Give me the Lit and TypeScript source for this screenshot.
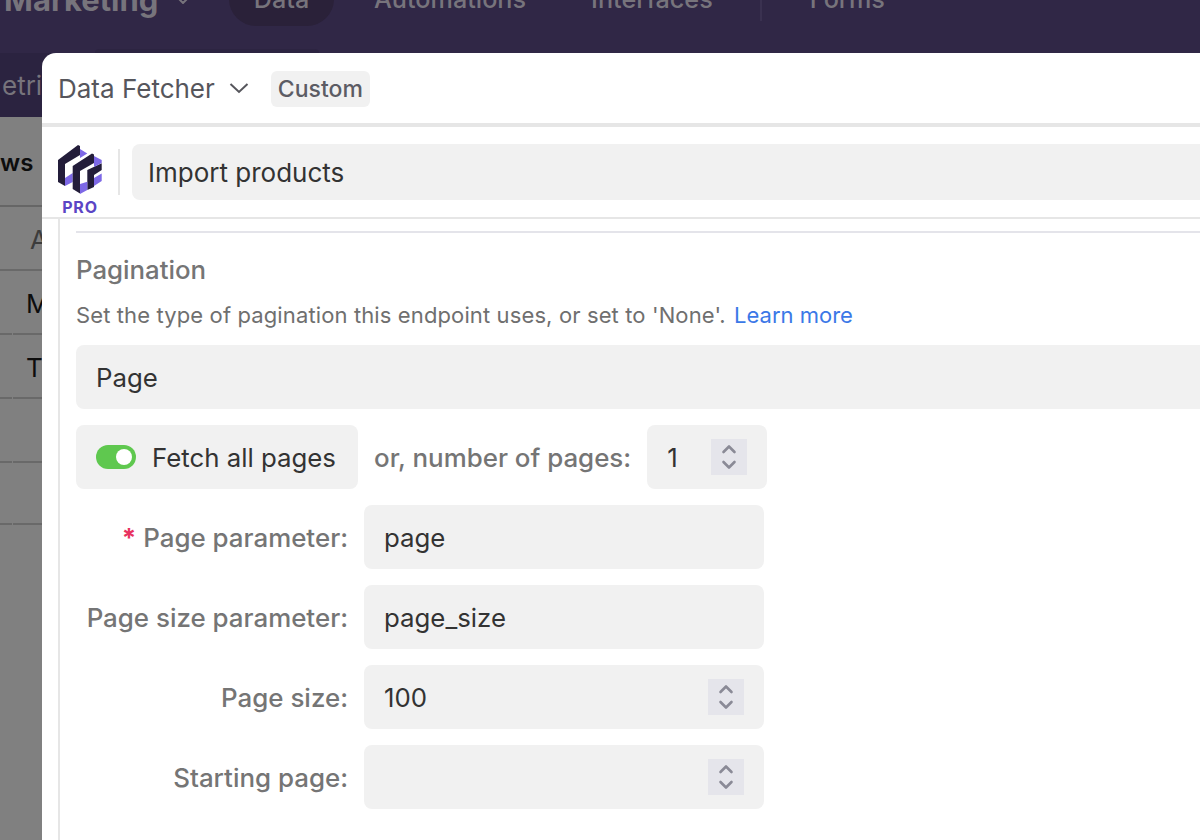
import { LitElement, html, css } from "lit";
import { customElement } from "lit/decorators.js";

const spinner = html`<span class="spin"><svg width="16" height="26" viewBox="0 0 16 26" fill="none" stroke="#8a8a96" stroke-width="2.6" stroke-linecap="round" stroke-linejoin="round"><path d="M2.5 8 L8 2.5 L13.5 8"/><path d="M2.5 18 L8 23.5 L13.5 18"/></svg></span>`;

@customElement("app-root")
export class AppRoot extends LitElement {
  static styles = css`
    :host { display: block; width: 1200px; height: 840px; position: relative; overflow: hidden; font-family: Inter, "Liberation Sans", sans-serif; background: #808080; }
    * { box-sizing: border-box; }
    .top { height: 53px; background: #302746; overflow: hidden; position: relative; }
    .topin { display: flex; align-items: center; height: 54px; margin-top: -28px; color: #77747c; font-size: 25.2px; font-weight: 500; }
    .brand { margin-left: 4px; width: 225px; font-weight: 700; font-size: 31px; flex: none; display: flex; align-items: center; }
    .brand svg { margin-left: 18px; margin-top: 2px; }
    .pill { background: #2a2139; border-radius: 28px; width: 105px; height: 54px; display: flex; align-items: center; justify-content: center; flex: none; }
    .nav { flex: none; }
    .vd { width: 2px; height: 44px; background: #3a3150; flex: none; margin: 0 48px 0 47px; }
    .tabtop { position: absolute; left: 95px; top: 49px; width: 224px; height: 4px; background: #2c2441; border-radius: 6px 6px 0 0; }
    .sub { height: 64px; background: #2b2340; color: #77747c; font-size: 26px; display: flex; align-items: center; padding-left: 2px; }
    .r0 { height: 90px; padding-top: 3px; display: flex; align-items: center; font-size: 24px; font-weight: 600; color: #0d0d0d; border-bottom: 2px solid #666; }
    .r { height: 64px; display: flex; align-items: center; padding-left: 26px; font-size: 26px; color: #0d0d0d; background: linear-gradient(#696969, #696969) 0 100% / 12px 2px no-repeat, linear-gradient(#696969, #696969) 13px 100% / 100% 2px no-repeat; }
    .r.head { padding-left: 30px; color: #3c3c3c; background: linear-gradient(#696969, #696969) 0 100% / 100% 2px no-repeat; }
    .r.last { height: 62px; }
    .modal { position: absolute; left: 42px; top: 53px; right: 0; bottom: 0; background: #fff; border-top-left-radius: 14px; display: flex; flex-direction: column; }
    .mh { height: 74px; flex: none; border-bottom: 4px solid #e6e6e6; display: flex; align-items: center; padding-left: 16px; color: #56565c; font-size: 26px; }
    .chev { margin-left: 14px; }
    .tag { margin: 2px 0 0 22px; background: #f1f1f1; border-radius: 6px; height: 36px; width: 99px; display: flex; align-items: center; justify-content: center; font-size: 23px; font-weight: 500; color: #5c5c64; }
    .mt { height: 92px; flex: none; border-bottom: 2px solid #e6e6e6; display: flex; align-items: flex-start; padding-left: 16px; }
    .logo { width: 44px; margin-top: 18px; display: flex; flex-direction: column; align-items: center; flex: none; }
    .pro { font-size: 16px; font-weight: 700; color: #5b45c5; letter-spacing: 0.8px; line-height: 18px; margin-top: 4px; }
    .div { width: 2px; height: 46px; background: #e6e6e6; margin: 22px 12px 0 16px; flex: none; }
    .name { margin-top: 17px; flex: 1; height: 56px; background: #f1f1f1; border-radius: 8px 0 0 8px; display: flex; align-items: center; padding-left: 16px; font-size: 26px; color: #333; }
    .body { flex: 1; margin-left: 16px; border-left: 2px solid #e6e6e6; padding: 12px 0 0 16px; display: flex; flex-direction: column; }
    hr { border: 0; height: 2px; background: #e4e4ea; margin: 0; }
    h3 { margin: 22px 0 0; font-size: 25.8px; line-height: 30px; font-weight: 500; color: #757575; }
    p { margin: 15px 0 0; font-size: 22px; line-height: 30px; color: #6f6f6f; letter-spacing: 0.12px; }
    a { color: #3b78e7; text-decoration: none; letter-spacing: 0; margin-left: 2px; }
    .field { background: #f1f1f1; border-radius: 8px; height: 64px; display: flex; align-items: center; font-size: 25.8px; color: #333; }
    .sel { margin-top: 15px; padding-left: 20px; border-radius: 8px 0 0 8px; }
    .line { display: flex; align-items: center; margin-top: 16px; }
    .fetch { width: 282px; padding-left: 20px; flex: none; }
    .sw { width: 40px; height: 24px; background: #5fc84f; border-radius: 12px; position: relative; margin-right: 16px; flex: none; }
    .sw i { position: absolute; right: 4px; top: 4px; width: 16px; height: 16px; background: #fff; border-radius: 50%; }
    .or { margin-left: 16px; margin-right: 16px; color: #757575; font-size: 25.9px; font-weight: 500; flex: none; padding-top: 1px; }
    .num { width: 120px; padding-left: 20px; justify-content: space-between; padding-right: 20px; flex: none; }
    .spin { width: 36px; height: 36px; background: #e5e5eb; display: flex; align-items: center; justify-content: center; flex: none; }
    .lab { width: 272px; text-align: right; color: #757575; font-size: 25.9px; font-weight: 500; flex: none; padding-top: 1px; }
    .lab b { color: #e8335f; font-weight: 700; }
    .inp { width: 400px; margin-left: 16px; padding: 0 20px; justify-content: space-between; flex: none; }
  `;
  render() {
    return html`
      <div class="top">
        <div class="topin">
          <span class="brand">Marketing<svg width="14" height="8" viewBox="0 0 14 8" fill="none" stroke="#77747c" stroke-width="2"><path d="M1 1 L7 7 L13 1"/></svg></span>
          <span class="pill">Data</span>
          <span class="nav" style="margin-left:40px">Automations</span>
          <span class="nav" style="margin-left:65px">Interfaces</span>
          <span class="vd"></span>
          <span class="nav">Forms</span>
        </div>
        <span class="tabtop"></span>
      </div>
      <div class="sub">etri</div>
      <div class="rows">
        <div class="r0">ws</div>
        <div class="r head">A</div>
        <div class="r">M</div>
        <div class="r">T</div>
        <div class="r"></div>
        <div class="r last"></div>
      </div>
      <div class="modal">
        <div class="mh">Data Fetcher
          <svg class="chev" width="20" height="12" viewBox="0 0 20 12" fill="none" stroke="#56565c" stroke-width="2"><path d="M1.5 2 L10 10 L18.5 2"/></svg>
          <span class="tag">Custom</span>
        </div>
        <div class="mt">
          <div class="logo">
            <svg width="44" height="49" viewBox="0 0 44 49">
              <path fill="#231d3a" d="M0 15 L20 0 L22 1 L22 10 L7 19 L7 41 L0 37Z"/>
              <path fill="#7d68e6" d="M22 4 L29.3 8.5 L22 13Z M7 33 L14.7 28 L14.7 37 L7 41Z"/>
              <path fill="#231d3a" d="M14.7 21 L34 8.5 L36 9.5 L36 18 L22 26 L22 48.5 L14.7 44Z"/>
              <path fill="#231d3a" d="M29.3 25 L43.7 18.3 L43.7 25 L36 30 L36 42 L29.3 45Z"/>
              <path fill="#7d68e6" d="M36 11 L43.7 15 L43.7 18 L36 22Z M36 33 L43.7 28.5 L43.7 36 L36 41Z M22 39 L29.3 36.7 L29.3 45 L22 49Z"/>
            </svg>
            <span class="pro">PRO</span>
          </div>
          <span class="div"></span>
          <div class="name">Import products</div>
        </div>
        <div class="body">
          <hr />
          <h3>Pagination</h3>
          <p>Set the type of pagination this endpoint uses, or set to 'None'. <a>Learn more</a></p>
          <div class="field sel">Page</div>
          <div class="line">
            <div class="field fetch"><span class="sw"><i></i></span>Fetch all pages</div>
            <span class="or">or, number of pages:</span>
            <div class="field num">1 ${spinner}</div>
          </div>
          <div class="line"><span class="lab"><b>*</b> Page parameter:</span><div class="field inp">page</div></div>
          <div class="line"><span class="lab">Page size parameter:</span><div class="field inp">page_size</div></div>
          <div class="line"><span class="lab">Page size:</span><div class="field inp">100 ${spinner}</div></div>
          <div class="line"><span class="lab">Starting page:</span><div class="field inp"><span></span>${spinner}</div></div>
        </div>
      </div>
    `;
  }
}
